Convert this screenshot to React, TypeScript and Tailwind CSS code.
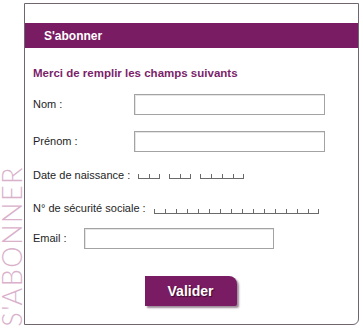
const purple = 'bg-[#7a1c63]';

function Comb({ cells }: { cells: number }) {
  return (
    <div className="flex h-[5px]">
      {Array.from({ length: cells }).map((_, i) => (
        <span
          key={i}
          className={`w-[11px] border-b border-l border-[#6a6a6a] ${i === cells - 1 ? 'border-r' : ''}`}
        />
      ))}
    </div>
  );
}

function TextInput({ width }: { width: string }) {
  return (
    <input
      type="text"
      className={`${width} h-[21px] border border-[#a3a3a3] bg-white outline-none shadow-[inset_1px_1px_0_#e6e6e6]`}
    />
  );
}

export default function App() {
  return (
    <div className="flex w-[363px] h-[329px] bg-white pt-[3px] font-['Liberation_Sans',Arial,sans-serif] text-[#1e1e1e]">
      {/* vertical side title */}
      <div className="w-[24px] flex items-end justify-center pb-[2px]">
        <span className="[writing-mode:vertical-rl] rotate-180 text-[27px] leading-[24px] tracking-[1.5px] font-light text-[#d9b1cb] font-['Lato','Liberation_Sans',sans-serif]">
          S'ABONNER
        </span>
      </div>

      {/* card */}
      <div className="w-[335px] h-[322px] border border-[#6f6670] rounded-br-[6px] flex flex-col">
        <div className="h-[19px]" />
        <div className={`${purple} h-[25px] flex items-center pl-[19px] pt-[1px]`}>
          <span className="text-white text-[12px] font-bold">S'abonner</span>
        </div>

        <div className="pl-[8px] flex flex-col">
          <p className="mt-[18px] text-[11.5px] leading-[14px] font-bold text-[#7b1f6b]">
            Merci de remplir les champs suivants
          </p>

          <div className="mt-[14px] flex items-center">
            <span className="w-[101px] text-[11px]">Nom :</span>
            <TextInput width="w-[191px]" />
          </div>

          <div className="mt-[16px] flex items-center">
            <span className="w-[101px] text-[11px]">Prénom :</span>
            <TextInput width="w-[191px]" />
          </div>

          <div className="mt-[16px] flex items-end h-[14px]">
            <span className="text-[11px] leading-[14px]">Date de naissance :</span>
            <div className="ml-[8px] mb-[3px] flex gap-[9px]">
              <Comb cells={2} />
              <Comb cells={2} />
              <Comb cells={4} />
            </div>
          </div>

          <div className="mt-[19px] flex items-end h-[14px]">
            <span className="text-[11px] leading-[14px]">N° de sécurité sociale :</span>
            <div className="ml-[8px] mb-[1px]">
              <Comb cells={15} />
            </div>
          </div>

          <div className="mt-[13px] flex items-center">
            <span className="w-[51px] text-[11px]">Email :</span>
            <TextInput width="w-[190px]" />
          </div>
        </div>

        <div className="mt-[27px] flex justify-center pr-[2px]">
          <button className={`${purple} w-[92px] h-[30px] rounded-tr-[8px] rounded-br-[2px] shadow-[2px_2px_2px_#9b8c98] text-white text-[14px] font-bold [text-shadow:1px_1px_1px_#3c0a30]`}>
            Valider
          </button>
        </div>
      </div>
    </div>
  );
}
